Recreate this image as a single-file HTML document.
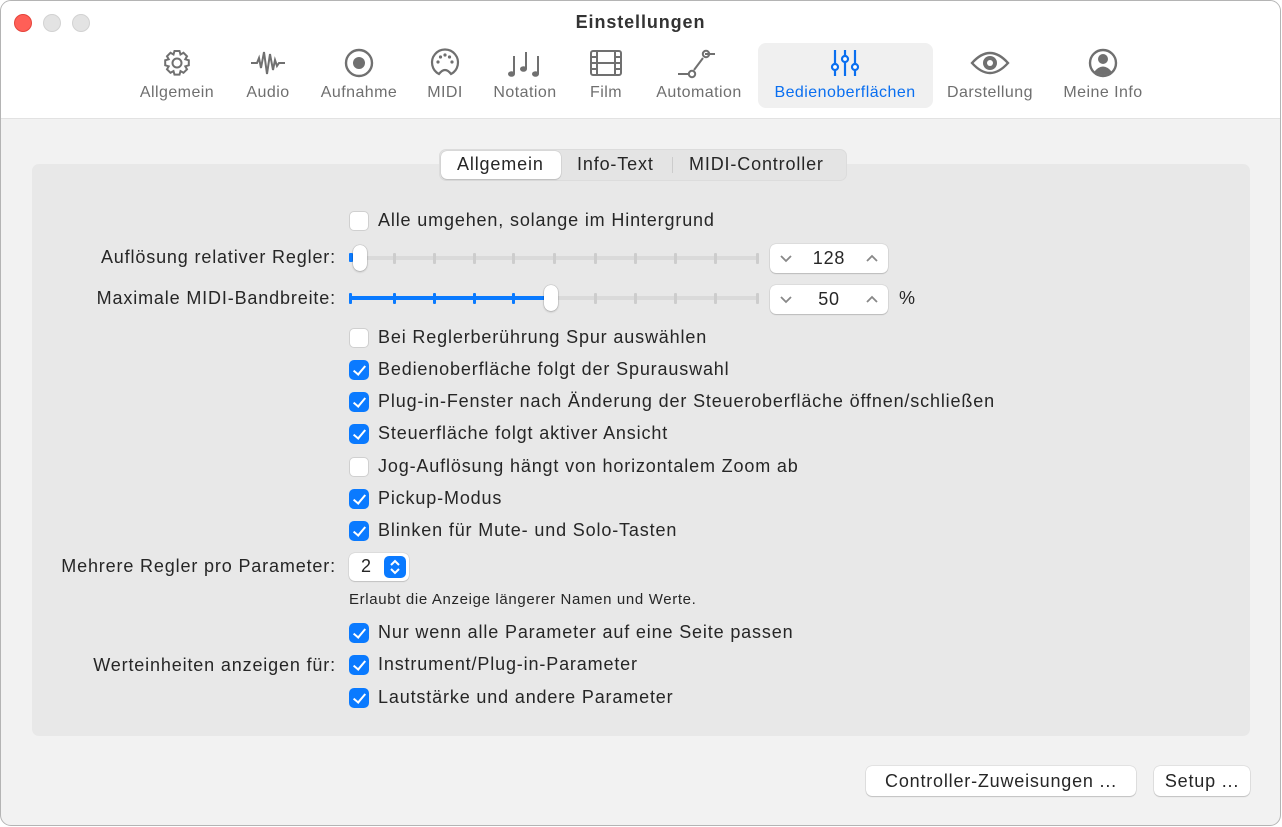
<!DOCTYPE html>
<html><head><meta charset="utf-8"><style>
*{margin:0;padding:0;box-sizing:border-box}
body{width:1282px;height:827px;background:#fff;font-family:"Liberation Sans",sans-serif;color:#262626;position:relative;overflow:hidden}
.win{position:absolute;left:0;top:0;width:1281px;height:826px;border:1px solid #b4b4b4;border-radius:11px;background:#f2f2f2;overflow:hidden}
.title{position:absolute;left:0;top:0;width:100%;height:118px;background:#fff;border-bottom:1px solid #e2e2e2}
.tl{position:absolute;top:13px;width:18px;height:18px;border-radius:50%;background:#e3e3e3;border:1px solid #d2d2d2}
.a{position:absolute;white-space:nowrap}
.tab{position:absolute;top:0;text-align:center;font-size:16px;letter-spacing:.45px;color:#6f6f6f}
.tab svg{position:absolute;left:50%;top:46px;transform:translateX(-50%)}
.tab span{position:absolute;top:83px;transform:translateX(-50%);left:50%;white-space:nowrap}
.box{position:absolute;left:31px;top:163px;width:1218px;height:572px;background:#e8e8e8;border-radius:7px}
.t{font-size:18px;letter-spacing:.85px;position:absolute;white-space:nowrap}
.r{text-align:right;width:322px;left:13px}
.cb{position:absolute;left:348px;width:20px;height:20px;border-radius:5px;background:#fff;border:1px solid #d0d0d0}
.cb.on{background:#0a7aff;border-color:#0a7aff}
.cb.on:after{content:"";position:absolute;left:6px;top:2px;width:5px;height:10px;border:solid #fff;border-width:0 2.6px 2.6px 0;transform:rotate(40deg)}
.trk{position:absolute;left:348px;width:410px;height:4px;background:#dadada;border-radius:2px}
.tk{position:absolute;width:3px;height:11px;background:#cdcdcd;border-radius:1px}
.tk.b{background:#0a7aff}
.knob{position:absolute;width:14px;height:26px;background:#fff;border-radius:7px;box-shadow:0 0 1px rgba(0,0,0,.45),0 1px 2px rgba(0,0,0,.2)}
.step{position:absolute;left:769px;width:118px;height:29px;background:#fff;border-radius:6px;box-shadow:0 0 1px rgba(0,0,0,.35),0 1px 1px rgba(0,0,0,.15);font-size:18px;letter-spacing:.8px;text-align:center;line-height:29px}
.step svg{position:absolute;top:9px}
.btn{position:absolute;top:765px;height:30px;background:#fff;border-radius:6px;box-shadow:0 0 1px rgba(0,0,0,.4),0 1px 1px rgba(0,0,0,.15);font-size:18px;letter-spacing:.8px;text-align:center;line-height:30px}
</style></head><body>
<div class="win">
<div class="title">
<div class="tl" style="left:13px;background:#ff5f57;border-color:#e5443b"></div>
<div class="tl" style="left:42px"></div>
<div class="tl" style="left:71px"></div>
<div class="a" style="left:0;width:100%;text-align:center;top:11px;font-size:18px;letter-spacing:.9px;font-weight:bold;color:#333">Einstellungen</div>
<div style="position:absolute;left:757px;top:42px;width:175px;height:65px;background:#f0f0f0;border-radius:8px"></div>

<div class="tab" style="left:176px"><svg width="30" height="32" viewBox="0 0 30 32" fill="none" stroke="#707070" stroke-width="2"><path d="M12.5 4h5l1 3.5 3-1.7 3.5 3.5-1.7 3 3.5 1v5l-3.5 1 1.7 3-3.5 3.5-3-1.7-1 3.5h-5l-1-3.5-3 1.7-3.5-3.5 1.7-3-3.5-1v-5l3.5-1-1.7-3 3.5-3.5 3 1.7z"/><circle cx="15" cy="16" r="4.5"/></svg><span>Allgemein</span></div>
<div class="tab" style="left:267px"><svg width="36" height="32" viewBox="0 0 36 32" fill="none" stroke="#707070" stroke-width="2"><path d="M1 16h6l2-5 2 10 3-16 3 22 3-20 3 16 2-10 2 6 2-3h6"/></svg><span>Audio</span></div>
<div class="tab" style="left:358px"><svg width="32" height="32" viewBox="0 0 32 32"><circle cx="16" cy="16" r="13" fill="none" stroke="#707070" stroke-width="2.4"/><circle cx="16" cy="16" r="6" fill="#707070"/></svg><span>Aufnahme</span></div>
<div class="tab" style="left:444px"><svg width="32" height="32" viewBox="0 0 32 32" fill="none" stroke="#707070" stroke-width="2.2"><path d="M10 27 A13 13 0 1 1 22 27 Q16 19 10 27z"/><g fill="#707070" stroke="none"><circle cx="9" cy="15" r="1.6"/><circle cx="11.5" cy="10" r="1.6"/><circle cx="16" cy="8" r="1.6"/><circle cx="20.5" cy="10" r="1.6"/><circle cx="23" cy="15" r="1.6"/></g></svg><span>MIDI</span></div>
<div class="tab" style="left:524px"><svg width="36" height="32" viewBox="0 0 36 32" fill="#707070" stroke="#707070" stroke-width="2"><path d="M7 27V9M19 22V5M31 27V9" fill="none"/><ellipse cx="4.5" cy="27" rx="3.5" ry="2.8" stroke="none"/><ellipse cx="16.5" cy="22" rx="3.5" ry="2.8" stroke="none"/><ellipse cx="28.5" cy="27" rx="3.5" ry="2.8" stroke="none"/></svg><span>Notation</span></div>
<div class="tab" style="left:605px"><svg width="34" height="32" viewBox="0 0 34 32" fill="none" stroke="#707070" stroke-width="2"><rect x="2" y="4" width="30" height="24" rx="2"/><path d="M8 4v24M26 4v24M8 16h18M2 10h6M2 16h6M2 22h6M26 10h6M26 16h6M26 22h6"/></svg><span>Film</span></div>
<div class="tab" style="left:698px"><svg width="44" height="32" viewBox="0 0 44 32" fill="none" stroke="#707070" stroke-width="2"><path d="M1 27h10M28 7h10M17 23l9-12"/><circle cx="15" cy="27" r="3.2"/><circle cx="29" cy="7" r="3.2"/></svg><span>Automation</span></div>
<div class="tab" style="left:844px;color:#0a6ff0"><svg width="30" height="32" viewBox="0 0 30 32" fill="none" stroke="#0a6ff0" stroke-width="2.2"><path d="M5 3v26M15 3v26M25 3v26"/><circle cx="5" cy="20" r="3" fill="#fff"/><circle cx="15" cy="12" r="3" fill="#fff"/><circle cx="25" cy="20" r="3" fill="#fff"/></svg><span>Bedienoberflächen</span></div>
<div class="tab" style="left:989px"><svg width="40" height="32" viewBox="0 0 40 32"><path d="M2 16Q20-4 38 16Q20 36 2 16z" fill="none" stroke="#707070" stroke-width="2.4"/><circle cx="20" cy="16" r="7" fill="#707070"/><circle cx="20" cy="16" r="3" fill="#fff"/></svg><span>Darstellung</span></div>
<div class="tab" style="left:1102px"><svg width="32" height="32" viewBox="0 0 32 32"><circle cx="16" cy="16" r="13" fill="none" stroke="#707070" stroke-width="2.4"/><circle cx="16" cy="12" r="5" fill="#707070"/><path d="M7 25Q16 14 25 25Q16 31 7 25z" fill="#707070"/></svg><span>Meine Info</span></div>
</div>

<div class="box"></div>
<div style="position:absolute;left:438px;top:148px;width:408px;height:32px;background:#e4e4e4;border-radius:7px;border:1px solid #dcdcdc"></div>
<div style="position:absolute;left:440px;top:150px;width:120px;height:28px;background:#fff;border-radius:6px;box-shadow:0 0 1px rgba(0,0,0,.35),0 1px 1px rgba(0,0,0,.12)"></div>
<div style="position:absolute;left:671px;top:156px;width:1px;height:16px;background:#ccc"></div>
<div class="t" style="left:456px;top:153px">Allgemein</div>
<div class="t" style="left:576px;top:153px">Info-Text</div>
<div class="t" style="left:688px;top:153px">MIDI-Controller</div>

<div class="cb" style="top:210px"></div><div class="t" style="left:377px;top:209px">Alle umgehen, solange im Hintergrund</div>

<div class="t r" style="top:246px">Auflösung relativer Regler:</div>
<div class="trk" style="top:255px"></div>
<div class="tk b" style="left:348px;top:252px;width:4px;height:9px"></div>
<div class="tk" style="left:392px;top:252px"></div><div class="tk" style="left:432px;top:252px"></div><div class="tk" style="left:472px;top:252px"></div><div class="tk" style="left:511px;top:252px"></div><div class="tk" style="left:552px;top:252px"></div><div class="tk" style="left:593px;top:252px"></div><div class="tk" style="left:633px;top:252px"></div><div class="tk" style="left:673px;top:252px"></div><div class="tk" style="left:713px;top:252px"></div><div class="tk" style="left:755px;top:252px"></div>
<div class="knob" style="left:352px;top:244px"></div>
<div class="step" style="top:243px">128<svg style="left:9px" width="14" height="10" viewBox="0 0 14 10" fill="none" stroke="#888" stroke-width="1.8"><path d="M2 3l5 5 5-5"/></svg><svg style="right:9px" width="14" height="10" viewBox="0 0 14 10" fill="none" stroke="#888" stroke-width="1.8"><path d="M2 8l5-5 5 5"/></svg></div>

<div class="t r" style="top:287px">Maximale MIDI-Bandbreite:</div>
<div class="trk" style="top:295px"></div>
<div style="position:absolute;left:348px;top:295px;width:200px;height:4px;background:#0a7aff;border-radius:2px"></div>
<div class="tk b" style="left:348px;top:292px"></div><div class="tk b" style="left:392px;top:292px"></div><div class="tk b" style="left:432px;top:292px"></div><div class="tk b" style="left:472px;top:292px"></div><div class="tk b" style="left:511px;top:292px"></div>
<div class="tk" style="left:593px;top:292px"></div><div class="tk" style="left:633px;top:292px"></div><div class="tk" style="left:673px;top:292px"></div><div class="tk" style="left:713px;top:292px"></div><div class="tk" style="left:755px;top:292px"></div>
<div class="knob" style="left:543px;top:284px"></div>
<div class="step" style="top:284px">50<svg style="left:9px" width="14" height="10" viewBox="0 0 14 10" fill="none" stroke="#888" stroke-width="1.8"><path d="M2 3l5 5 5-5"/></svg><svg style="right:9px" width="14" height="10" viewBox="0 0 14 10" fill="none" stroke="#888" stroke-width="1.8"><path d="M2 8l5-5 5 5"/></svg></div>
<div class="t" style="left:898px;top:287px">%</div>

<div class="cb" style="top:327px"></div><div class="t" style="left:377px;top:326px">Bei Reglerberührung Spur auswählen</div>
<div class="cb on" style="top:359px"></div><div class="t" style="left:377px;top:358px">Bedienoberfläche folgt der Spurauswahl</div>
<div class="cb on" style="top:391px"></div><div class="t" style="left:377px;top:390px">Plug-in-Fenster nach Änderung der Steueroberfläche öffnen/schließen</div>
<div class="cb on" style="top:423px"></div><div class="t" style="left:377px;top:422px">Steuerfläche folgt aktiver Ansicht</div>
<div class="cb" style="top:456px"></div><div class="t" style="left:377px;top:455px">Jog-Auflösung hängt von horizontalem Zoom ab</div>
<div class="cb on" style="top:488px"></div><div class="t" style="left:377px;top:487px">Pickup-Modus</div>
<div class="cb on" style="top:520px"></div><div class="t" style="left:377px;top:519px">Blinken für Mute- und Solo-Tasten</div>

<div class="t r" style="top:555px">Mehrere Regler pro Parameter:</div>
<div style="position:absolute;left:348px;top:552px;width:60px;height:28px;background:#fff;border-radius:6px;box-shadow:0 0 1px rgba(0,0,0,.35),0 1px 1px rgba(0,0,0,.12)"></div>
<div class="t" style="left:360px;top:555px">2</div>
<div style="position:absolute;left:383px;top:555px;width:22px;height:22px;background:#0a7aff;border-radius:5px"><svg width="22" height="22" viewBox="0 0 22 22" fill="none" stroke="#fff" stroke-width="2"><path d="M7 9l4-4 4 4M7 13l4 4 4-4"/></svg></div>
<div class="t" style="left:348px;top:590px;font-size:15px;letter-spacing:.65px">Erlaubt die Anzeige längerer Namen und Werte.</div>

<div class="cb on" style="top:622px"></div><div class="t" style="left:377px;top:621px">Nur wenn alle Parameter auf eine Seite passen</div>
<div class="t r" style="top:654px">Werteinheiten anzeigen für:</div>
<div class="cb on" style="top:654px"></div><div class="t" style="left:377px;top:653px">Instrument/Plug-in-Parameter</div>
<div class="cb on" style="top:687px"></div><div class="t" style="left:377px;top:686px">Lautstärke und andere Parameter</div>

<div class="btn" style="left:865px;width:270px">Controller-Zuweisungen ...</div>
<div class="btn" style="left:1153px;width:96px">Setup ...</div>
</div>
</body></html>
